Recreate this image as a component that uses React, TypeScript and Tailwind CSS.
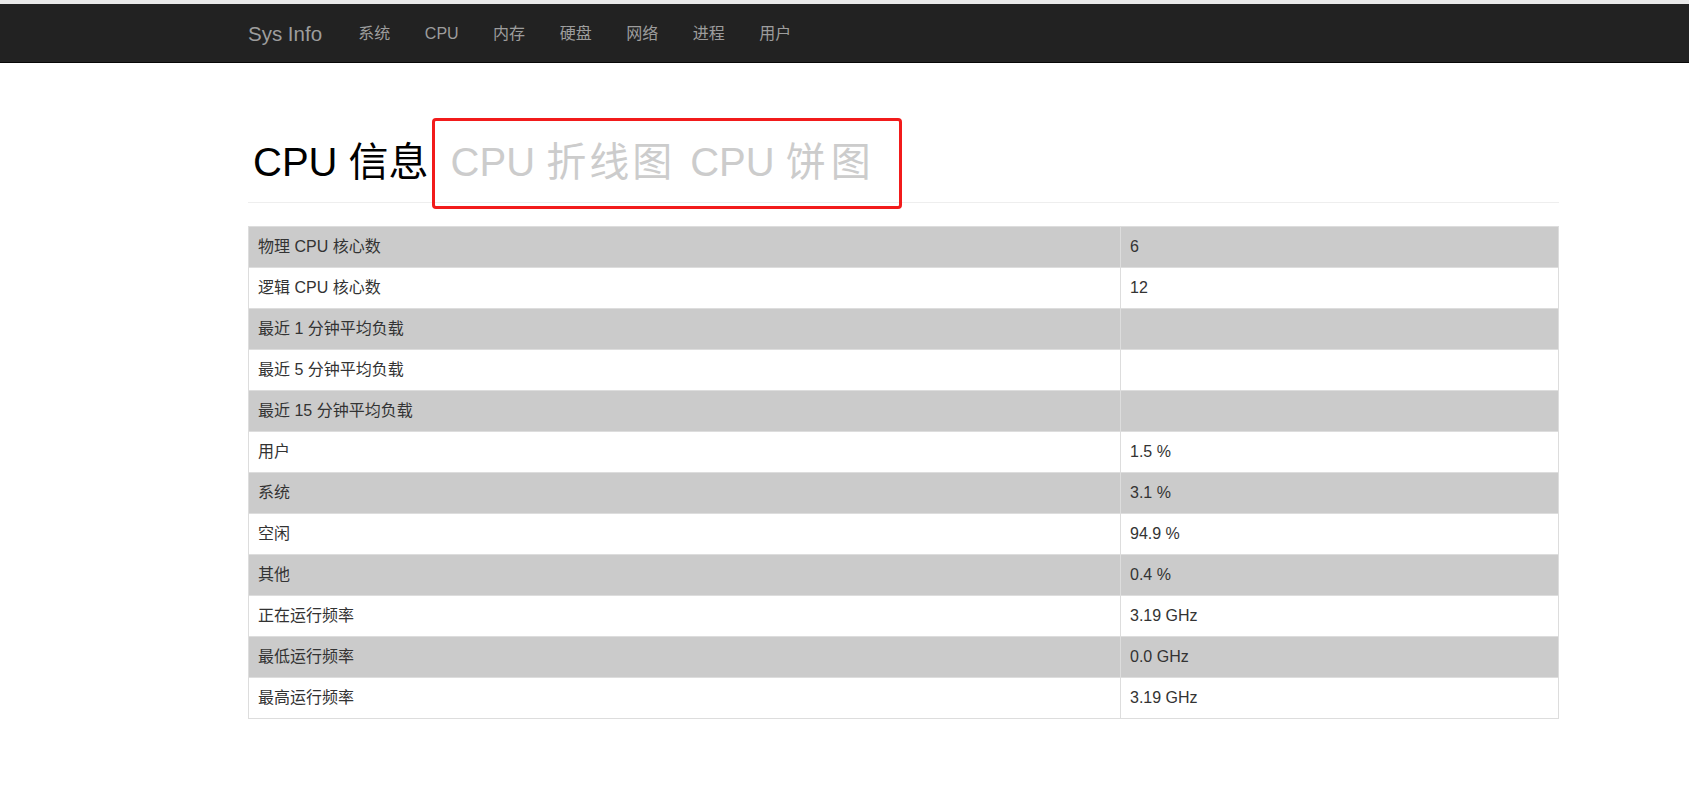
import React from 'react';

const navLinks = ['系统', 'CPU', '内存', '硬盘', '网络', '进程', '用户'];

const cpuRows: { label: string; value: string }[] = [
  { label: '物理 CPU 核心数', value: '6' },
  { label: '逻辑 CPU 核心数', value: '12' },
  { label: '最近 1 分钟平均负载', value: '' },
  { label: '最近 5 分钟平均负载', value: '' },
  { label: '最近 15 分钟平均负载', value: '' },
  { label: '用户', value: '1.5 %' },
  { label: '系统', value: '3.1 %' },
  { label: '空闲', value: '94.9 %' },
  { label: '其他', value: '0.4 %' },
  { label: '正在运行频率', value: '3.19 GHz' },
  { label: '最低运行频率', value: '0.0 GHz' },
  { label: '最高运行频率', value: '3.19 GHz' },
];

const font = { fontFamily: '"Liberation Sans", Arial, "Noto Sans CJK SC", sans-serif' };

const App: React.FC = () => {
  return (
    <div className="min-h-screen bg-white text-[#333]" style={font}>
      <div className="h-[4px] bg-[#e9e9e9]" />

      {/* Navbar */}
      <nav className="h-[59px] bg-[#222] border-b border-[#080808] flex items-center">
        <div className="pl-[248px] pt-[2px] flex items-center">
          <a className="text-[20.5px] leading-[22px] text-[#9d9d9d] pr-[19px]">Sys Info</a>
          {navLinks.map(link => (
            <a key={link} className="text-[16px] leading-[22px] text-[#9d9d9d] px-[17.25px]">
              {link}
            </a>
          ))}
        </div>
      </nav>

      <main className="pl-[248px]">
        <div className="relative w-[1311px]">
          {/* Page header */}
          <div className="pt-[77px] pb-[18px] border-b border-[#eee]">
            <h1 className="pl-[5px] text-[40px] leading-[44px] text-black flex items-baseline">
              <span>CPU 信息</span>
              <a className="ml-[22px] text-[#cccccc]">
                CPU <span className="tracking-[3px]">折线图</span>
              </a>
              <a className="ml-[15px] text-[#cccccc]">
                CPU <span className="tracking-[5px]">饼图</span>
              </a>
            </h1>
          </div>

          {/* Highlight box */}
          <div className="absolute left-[184px] top-[55px] w-[470px] h-[91px] border-[3px] border-[#f21b1b] rounded-[4px] pointer-events-none" />

          {/* CPU table */}
          <div className="mt-[23px] border border-[#ddd] flex flex-col">
            {cpuRows.map((row, i) => (
              <div
                key={row.label}
                className={`flex ${i > 0 ? 'h-[41px] border-t border-[#ddd]' : 'h-[40px]'} ${
                  i % 2 === 0 ? 'bg-[#cbcbcb]' : 'bg-white'
                }`}
              >
                <div className="w-[872px] border-r border-[#ddd] px-[9px] flex items-center text-[16px] leading-[22px]">
                  {row.label}
                </div>
                <div className="flex-1 px-[9px] flex items-center text-[16px] leading-[22px]">
                  {row.value}
                </div>
              </div>
            ))}
          </div>
        </div>
      </main>
    </div>
  );
};

export default App;
